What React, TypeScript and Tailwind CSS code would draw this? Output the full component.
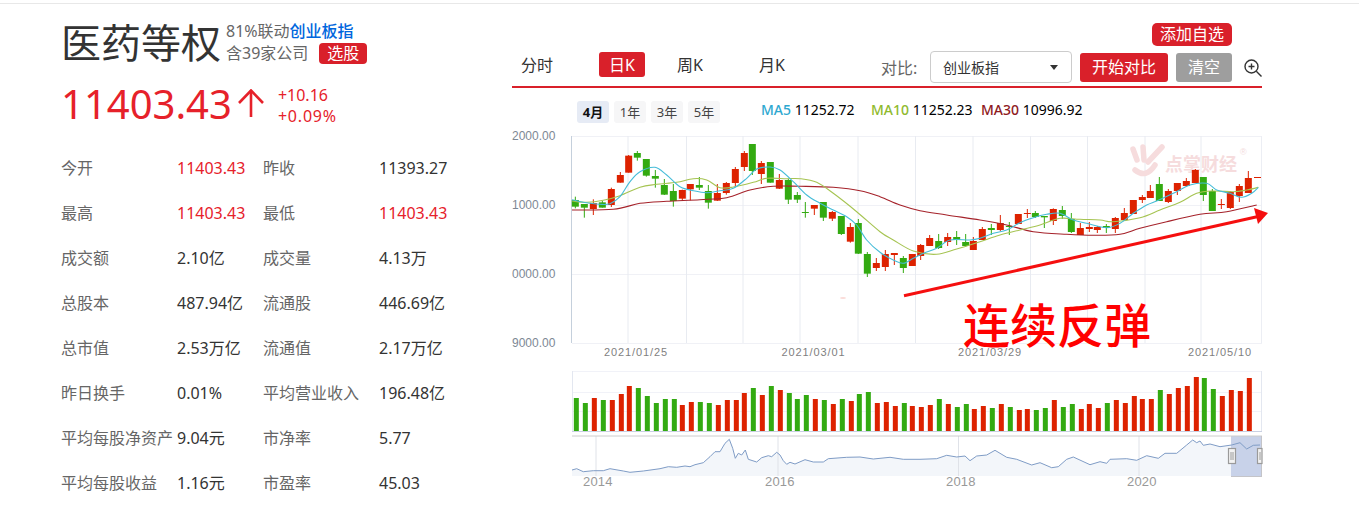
import React from 'react';

type Candle = [number, number, number, number, number, 'r' | 'g'];

const UP = '#dd2200';
const DOWN = '#33aa11';

// x, wick top, wick bottom, body top, body bottom (sampled at 3x, chart origin 500/125)
const candles: Candle[] = [
  [226, 215, 250, 225, 245, 'g'], [253, 237, 278, 237, 248, 'g'], [280, 223, 270, 234, 252, 'r'], [307, 228, 248, 232, 248, 'g'],
  [334, 188, 246, 192, 240, 'r'], [361, 141, 173, 150, 173, 'r'], [386, 90, 143, 92, 143, 'r'], [412, 78, 107, 84, 98, 'g'],
  [439, 102, 155, 102, 152, 'g'], [466, 135, 188, 153, 161, 'g'], [493, 162, 210, 180, 209, 'g'], [520, 177, 245, 198, 228, 'g'],
  [547, 194, 228, 195, 221, 'r'], [571, 177, 226, 177, 193, 'r'], [598, 156, 195, 180, 188, 'g'], [625, 180, 251, 198, 233, 'g'],
  [652, 177, 228, 204, 227, 'r'], [679, 171, 209, 174, 204, 'r'], [706, 126, 185, 132, 174, 'r'], [733, 78, 138, 84, 126, 'r'],
  [757, 57, 150, 57, 138, 'g'], [784, 108, 177, 114, 147, 'r'], [811, 111, 173, 111, 173, 'g'], [838, 147, 192, 165, 191, 'r'],
  [865, 162, 237, 165, 224, 'g'], [892, 201, 234, 210, 224, 'g'], [916, 231, 278, 261, 263, 'g'], [943, 240, 270, 240, 251, 'r'],
  [970, 231, 288, 231, 278, 'g'], [997, 258, 288, 261, 281, 'r'], [1024, 273, 330, 273, 327, 'g'], [1051, 294, 353, 306, 350, 'r'],
  [1075, 282, 387, 294, 386, 'g'], [1102, 381, 456, 387, 446, 'g'], [1129, 399, 438, 414, 429, 'r'], [1156, 375, 438, 387, 426, 'r'],
  [1183, 384, 420, 384, 390, 'r'], [1210, 393, 444, 399, 429, 'g'], [1237, 387, 423, 387, 423, 'r'], [1262, 357, 405, 360, 393, 'r'],
  [1289, 330, 363, 339, 363, 'r'], [1316, 327, 372, 348, 369, 'g'], [1343, 324, 363, 336, 351, 'r'], [1370, 318, 360, 336, 345, 'g'],
  [1397, 327, 366, 351, 363, 'g'], [1420, 336, 375, 348, 375, 'r'], [1447, 306, 345, 312, 345, 'r'], [1474, 297, 330, 309, 315, 'g'],
  [1501, 270, 318, 294, 315, 'r'], [1528, 291, 330, 303, 306, 'g'], [1555, 267, 297, 267, 297, 'r'], [1582, 252, 279, 264, 267, 'r'],
  [1606, 258, 279, 264, 276, 'g'], [1633, 273, 309, 273, 277, 'g'], [1660, 250, 300, 252, 288, 'r'], [1687, 243, 282, 255, 273, 'g'],
  [1714, 264, 324, 282, 321, 'g'], [1741, 294, 330, 309, 330, 'r'], [1768, 291, 321, 306, 312, 'r'], [1792, 303, 324, 306, 315, 'r'],
  [1819, 297, 324, 303, 309, 'g'], [1846, 276, 324, 279, 312, 'r'], [1873, 249, 285, 264, 285, 'r'], [1900, 225, 267, 225, 267, 'r'],
  [1927, 210, 234, 216, 225, 'r'], [1951, 180, 219, 198, 219, 'r'], [1978, 156, 228, 177, 228, 'g'], [2005, 192, 234, 198, 231, 'r'],
  [2032, 174, 210, 174, 198, 'r'], [2059, 159, 186, 168, 183, 'r'], [2086, 132, 174, 135, 174, 'r'], [2110, 156, 228, 156, 210, 'g'],
  [2137, 192, 258, 198, 258, 'g'], [2164, 222, 252, 237, 240, 'r'], [2191, 198, 252, 201, 249, 'r'], [2218, 177, 231, 183, 213, 'r'],
  [2245, 138, 204, 159, 204, 'r'],
];

const ma5: [number, number][] = [
  [216, 224], [250, 232], [300, 238], [330, 236], [360, 215], [390, 170], [420, 140], [465, 127], [500, 150], [540, 185], [580, 197],
  [620, 203], [660, 197], [700, 190], [740, 160], [770, 132], [810, 126], [840, 135], [880, 170], [920, 210], [960, 235], [1000, 255],
  [1040, 275], [1070, 300], [1100, 345], [1140, 382], [1180, 405], [1210, 415], [1240, 400], [1270, 385], [1310, 370], [1350, 345],
  [1410, 345], [1440, 340], [1480, 325], [1520, 315], [1560, 293], [1600, 278], [1640, 268], [1680, 265], [1720, 285], [1760, 295],
  [1820, 308], [1860, 295], [1900, 265], [1940, 240], [1970, 228], [2020, 205], [2070, 180], [2120, 175], [2150, 195], [2190, 205],
  [2225, 217], [2255, 205], [2275, 187],
];

const ma10: [number, number][] = [
  [216, 228], [260, 232], [310, 226], [360, 212], [420, 187], [470, 178], [530, 172], [580, 161], [620, 165], [660, 188], [700, 186],
  [760, 172], [800, 160], [860, 161], [900, 161], [950, 172], [1000, 205], [1070, 260], [1140, 320], [1180, 345], [1240, 378],
  [1310, 388], [1370, 372], [1440, 350], [1500, 330], [1560, 315], [1620, 300], [1680, 280], [1740, 283], [1800, 285], [1840, 290],
  [1920, 278], [1980, 255], [2040, 232], [2090, 205], [2140, 198], [2200, 200], [2240, 195], [2275, 187],
];

const ma30: [number, number][] = [
  [216, 255], [340, 253], [420, 235], [500, 229], [600, 224], [680, 218], [750, 195], [820, 184], [900, 184], [1000, 187], [1080, 197],
  [1140, 215], [1200, 240], [1260, 257], [1340, 270], [1440, 285], [1520, 300], [1600, 320], [1700, 328], [1780, 331], [1860, 328],
  [1920, 310], [2000, 290], [2100, 268], [2180, 260], [2270, 240],
];

// x, top of bar (sampled at 3x from 560/360, second half from 910/360)
const volumeA: [number, number, 'r' | 'g'][] = [
  [49, 114, 'g'], [76, 129, 'g'], [103, 114, 'r'], [130, 120, 'g'], [157, 120, 'r'], [184, 102, 'r'], [208, 78, 'r'], [235, 84, 'g'],
  [262, 108, 'g'], [289, 129, 'g'], [316, 117, 'g'], [343, 117, 'g'], [367, 135, 'r'], [394, 126, 'r'], [421, 126, 'g'], [448, 129, 'g'],
  [475, 135, 'r'], [502, 120, 'r'], [529, 120, 'r'], [553, 99, 'r'], [580, 84, 'g'], [607, 105, 'r'], [634, 78, 'g'], [661, 90, 'r'],
  [688, 99, 'g'], [712, 117, 'g'], [739, 105, 'g'], [766, 117, 'r'], [793, 120, 'g'], [820, 132, 'r'], [847, 117, 'g'], [874, 123, 'r'],
  [898, 102, 'g'], [925, 96, 'g'], [952, 129, 'r'], [979, 126, 'r'], [1006, 138, 'r'], [1033, 129, 'g'],
];

const volumeB: [number, number, 'r' | 'g'][] = [
  [7, 138, 'r'], [34, 141, 'r'], [61, 135, 'r'], [88, 117, 'g'], [115, 132, 'r'], [142, 141, 'g'], [169, 132, 'g'], [193, 147, 'r'],
  [220, 138, 'r'], [247, 144, 'g'], [274, 132, 'r'], [301, 141, 'g'], [328, 150, 'r'], [352, 147, 'r'], [379, 150, 'g'], [406, 144, 'g'],
  [433, 120, 'r'], [460, 141, 'g'], [487, 132, 'g'], [514, 147, 'r'], [538, 132, 'r'], [565, 144, 'r'], [592, 129, 'g'], [619, 120, 'r'],
  [646, 129, 'r'], [673, 108, 'r'], [697, 117, 'r'], [724, 117, 'r'], [751, 90, 'g'], [778, 102, 'r'], [805, 84, 'r'], [832, 78, 'r'],
  [859, 51, 'r'], [883, 54, 'g'], [910, 87, 'g'], [937, 108, 'r'], [964, 90, 'r'], [991, 93, 'r'], [1018, 54, 'r'],
];

const miniA: [number, number][] = [
  [36, 330], [50, 326], [70, 335], [100, 332], [130, 332], [150, 326], [190, 333], [210, 337], [250, 333], [300, 326], [325, 320], [350, 322],
  [375, 318], [390, 320], [405, 314], [430, 308], [450, 290], [465, 275], [480, 275], [495, 250], [508, 238], [518, 265], [526, 295], [535, 280],
  [545, 285], [556, 270], [565, 298], [590, 306], [605, 293], [625, 287], [635, 290], [650, 277], [660, 285], [670, 302], [680, 313], [690, 307],
  [705, 312], [735, 299], [760, 306], [790, 306], [805, 296], [860, 292], [900, 291], [940, 297], [990, 292], [1030, 298],
];

const miniB: [number, number][] = [
  [30, 298], [80, 296], [110, 286], [140, 291], [165, 288], [180, 302], [200, 288], [230, 285], [255, 271], [290, 292], [320, 298], [365, 315],
  [390, 308], [425, 323], [445, 320], [470, 298], [490, 291], [540, 314], [570, 305], [590, 310], [600, 298], [650, 296], [680, 301], [710, 287],
  [745, 295], [765, 280], [800, 280], [830, 255], [848, 240], [860, 248], [870, 243], [880, 256], [900, 252], [930, 260], [965, 255], [990, 248],
  [1010, 267], [1030, 256], [1050, 255],
];

const stats: [string, string, boolean, string, string, boolean][] = [
  ['今开', '11403.43', true, '昨收', '11393.27', false],
  ['最高', '11403.43', true, '最低', '11403.43', true],
  ['成交额', '2.10亿', false, '成交量', '4.13万', false],
  ['总股本', '487.94亿', false, '流通股', '446.69亿', false],
  ['总市值', '2.53万亿', false, '流通值', '2.17万亿', false],
  ['昨日换手', '0.01%', false, '平均营业收入', '196.48亿', false],
  ['平均每股净资产', '9.04元', false, '市净率', '5.77', false],
  ['平均每股收益', '1.16元', false, '市盈率', '45.03', false],
];

const fx = (x: number) => 500 + x / 3 - 512;
const fy = (y: number) => y / 3;

function smooth(points: [number, number][]) {
  let d = `M${points[0][0].toFixed(1)} ${points[0][1].toFixed(1)}`;
  for (let i = 0; i < points.length - 1; i++) {
    const p0 = points[Math.max(0, i - 1)];
    const p1 = points[i];
    const p2 = points[i + 1];
    const p3 = points[Math.min(points.length - 1, i + 2)];
    const c1x = p1[0] + (p2[0] - p0[0]) / 6;
    const c1y = p1[1] + (p2[1] - p0[1]) / 6;
    const c2x = p2[0] - (p3[0] - p1[0]) / 6;
    const c2y = p2[1] - (p3[1] - p1[1]) / 6;
    d += ` C${c1x.toFixed(1)} ${c1y.toFixed(1)} ${c2x.toFixed(1)} ${c2y.toFixed(1)} ${p2[0].toFixed(1)} ${p2[1].toFixed(1)}`;
  }
  return d;
}

const scaled = (pts: [number, number][]) => pts.map(([x, y]) => [fx(x), fy(y)] as [number, number]);

const miniPoints: [number, number][] = [
  ...miniA.map(([x, y]) => [560 + x / 3 - 512, 360 + y / 3 - 125] as [number, number]),
  ...miniB.map(([x, y]) => [910 + x / 3 - 512, 360 + y / 3 - 125] as [number, number]),
];
const miniLine = 'M' + miniPoints.map(([x, y]) => `${x.toFixed(1)} ${y.toFixed(1)}`).join(' L');
const miniArea = `${miniLine} L750 351 L60 351 Z`;

const gridX = [628, 686.5, 743, 800, 858, 915.5, 973, 1030.5, 1087.5, 1145, 1201].map((x) => x - 512);
const priceTicks: [string, number][] = [['2000.00', 136], ['1000.00', 205], ['0000.00', 274], ['9000.00', 343]];
const dateTicks: [string, number][] = [['2021/01/25', 604], ['2021/03/01', 781.5], ['2021/03/29', 958], ['2021/05/10', 1188]];
const yearTicks: [string, number, number][] = [['2014', 583, 596], ['2016', 765, 778], ['2018', 946, 958.5], ['2020', 1127, 1139]];

const KChart = () => (
  <svg width="750" height="365" className="block overflow-visible" fontFamily="'Liberation Sans', sans-serif">
    {/* main grid */}
    {priceTicks.map(([, y]) => (
      <line key={y} x1="60" x2="750" y1={y - 125 + 0.5} y2={y - 125 + 0.5} stroke="#f0f1f6" />
    ))}
    {gridX.map((x) => (
      <line key={x} x1={x} x2={x} y1="11" y2="218" stroke="#e8ebf1" />
    ))}
    <line x1="59.5" x2="59.5" y1="11" y2="218" stroke="#c5d0dc" />
    <line x1="749.5" x2="749.5" y1="11" y2="218" stroke="#eceef4" />
    {priceTicks.map(([label, y]) => (
      <text key={label} x="0" y={y - 125 + 4} fontSize="12" fill="#7d8894">{label}</text>
    ))}
    {dateTicks.map(([label, x]) => (
      <text key={label} x={x - 512} y="231" fontSize="11" letterSpacing="0.9" fill="#7f7f7f">{label}</text>
    ))}

    {/* watermark */}
    <g stroke="#f6dcdd" strokeWidth="5.5" strokeLinecap="round" fill="none">
      <path d="M621 24 L625 35" />
      <path d="M631 22 L632 35" />
      <path d="M650 22 L636 37" />
      <path d="M623 45 Q634 54 643 40" />
    </g>
    <text x="653" y="46" fontSize="18" fontWeight="700" fontFamily="'Noto Sans CJK SC', sans-serif" fill="#f6dcdd">点掌财经</text>
    <text x="728" y="30" fontSize="9" fill="#f3dcdc">®</text>
    <ellipse cx="331" cy="173" rx="3" ry="1" fill="#fbdcd8" />

    {/* candles */}
    {candles.map(([x, wt, wb, bt, bb, c]) => {
      const color = c === 'r' ? UP : DOWN;
      return (
        <g key={x}>
          <line x1={fx(x)} x2={fx(x)} y1={fy(wt)} y2={fy(wb)} stroke={color} />
          <rect x={fx(x) - 3.5} y={fy(bt)} width="7" height={Math.max(1, fy(bb) - fy(bt))} fill={color} />
        </g>
      );
    })}
    <line x1="742" x2="749" y1="52.5" y2="52.5" stroke={UP} />

    <path d={smooth(scaled(ma30))} fill="none" stroke="#a5222a" strokeWidth="1.1" />
    <path d={smooth(scaled(ma10))} fill="none" stroke="#a6c452" strokeWidth="1.1" />
    <path d={smooth(scaled(ma5))} fill="none" stroke="#45bcd8" strokeWidth="1.1" />

    {/* trend arrow */}
    <line x1="392" y1="170.7" x2="745" y2="91.7" stroke="#f50f0f" strokeWidth="3" />
    <polygon points="742,83 756,88 746,99" fill="#f50f0f" />

    {/* volume */}
    {[246, 267, 286].map((y) => (
      <line key={y} x1="60" x2="750" y1={y + 0.5} y2={y + 0.5} stroke="#f1f2f8" />
    ))}
    <line x1="60.5" x2="60.5" y1="246" y2="307" stroke="#e3e7f0" />
    <line x1="749.5" x2="749.5" y1="246" y2="307" stroke="#e3e7f0" />
    {volumeA.map(([x, top, c]) => (
      <rect key={x} x={560 + x / 3 - 512 - 2.5} y={360 + top / 3 - 125} width="5" height={431 - (360 + top / 3)} fill={c === 'r' ? UP : DOWN} />
    ))}
    {volumeB.map(([x, top, c]) => (
      <rect key={x} x={910 + x / 3 - 512 - 2.5} y={360 + top / 3 - 125} width="5" height={431 - (360 + top / 3)} fill={c === 'r' ? UP : DOWN} />
    ))}
    <line x1="60" x2="750" y1="306.5" y2="306.5" stroke="#c9d0e2" />

    {/* overview */}
    <path d={miniArea} fill="#f3f6fa" />
    {yearTicks.map(([, , x]) => (
      <line key={x} x1={x - 512} x2={x - 512} y1="311" y2="351" stroke="#dfe2e8" />
    ))}
    <rect x="719" y="311" width="31" height="40" fill="#c8d2e9" />
    <path d={miniLine} fill="none" stroke="#7f9cc6" strokeWidth="1" />
    <line x1="60" x2="750" y1="311" y2="311" stroke="#cccccc" />
    <line x1="719" x2="750" y1="351.5" y2="351.5" stroke="#c4c4c8" />
    <line x1="749.5" x2="749.5" y1="311" y2="351" stroke="#c4c4c8" />
    <g>
      <rect x="716.5" y="323.5" width="7" height="15" fill="#f3f3f3" stroke="#9a9a9a" strokeWidth="1.2" />
      <line x1="719" x2="719" y1="327" y2="335" stroke="#9a9a9a" />
      <line x1="721" x2="721" y1="327" y2="335" stroke="#9a9a9a" />
      <rect x="745.5" y="323.5" width="4.5" height="15" fill="#f3f3f3" stroke="#9a9a9a" strokeWidth="1.2" />
      <line x1="748" x2="748" y1="327" y2="335" stroke="#9a9a9a" />
    </g>
    {yearTicks.map(([label, x]) => (
      <text key={label} x={x - 512} y="361" fontSize="13" letterSpacing="0.2" fill="#999999">{label}</text>
    ))}
  </svg>
);

const App = () => {
  return (
    <div className="h-[517px] w-[1359px] overflow-hidden bg-white font-['Noto_Sans','Noto_Sans_CJK_SC',sans-serif] text-[16px] text-[#333]">
      <div className="mt-[3px] h-px bg-[#e8e8e8]" />
      <div className="flex">
        {/* left column */}
        <div className="w-[512px] pl-[61px]">
          <div className="flex h-[62px] items-start pt-[16px]">
            <h1 className="w-[165px] text-[40px] leading-[46px] font-normal text-[#333]">医药等权</h1>
            <div className="text-[16px] text-[#666]">
              <div className="flex h-[22px] items-center leading-[22px]">
                81%联动<span className="font-medium text-[#0066dd]">创业板指</span>
              </div>
              <div className="flex h-[22px] items-center leading-[22px]">
                含39家公司
                <span className="ml-[11px] rounded-[4px] bg-[#d9202a] px-[8px] text-[16px] leading-[21px] text-white">选股</span>
              </div>
            </div>
          </div>
          <div className="mt-[12px] flex h-[52px] items-center">
            <span className="text-[40px] leading-[52px] text-[#e6212a]">11403.43</span>
            <svg width="32" height="30" viewBox="0 0 32 30" className="ml-[3px]" fill="none" stroke="#e6212a" strokeWidth="2.6">
              <path d="M16 1.5V28" />
              <path d="M4 14L16 1.5L28 14" />
            </svg>
            <div className="ml-[11px] pt-[4px] text-[#e6212a]">
              <div className="leading-[21px]">+10.16</div>
              <div className="leading-[21px] tracking-[0.8px]">+0.09%</div>
            </div>
          </div>
          <div className="mt-[15px] grid grid-cols-[116px_86px_116px_auto]">
            {stats.map(([l1, v1, red1, l2, v2, red2]) => (
              <React.Fragment key={l1}>
                <div className="flex h-[45px] items-center whitespace-nowrap text-[#666]">{l1}</div>
                <div className={`flex h-[45px] items-center whitespace-nowrap ${red1 ? 'text-[#e6212a]' : 'text-[#333]'}`}>{v1}</div>
                <div className="flex h-[45px] items-center whitespace-nowrap text-[#666]">{l2}</div>
                <div className={`flex h-[45px] items-center whitespace-nowrap ${red2 ? 'text-[#e6212a]' : 'text-[#333]'}`}>{v2}</div>
              </React.Fragment>
            ))}
          </div>
        </div>

        {/* right column */}
        <div className="relative w-[750px]">
          <div className="flex h-[19px] items-start justify-end pr-[30px] pt-[19px]">
            <button className="h-[23px] w-[80px] rounded-[5px] bg-[#d9202a] text-[16px] leading-[23px] text-white">添加自选</button>
          </div>
          <div className="flex h-[65px] items-start border-b-2 border-[#d9202a] pt-[29px]">
            <span className="ml-[9px] mt-px w-[78px] leading-[25px]">分时</span>
            <span className="h-[25px] w-[46px] rounded-[3px] bg-[#d9202a] text-center leading-[26px] text-white">日K</span>
            <span className="ml-[32px] mt-px w-[82px] leading-[25px]">周K</span>
            <span className="mt-px w-[122px] leading-[25px]">月K</span>
            <span className="mt-[2px] w-[49px] leading-[28px] text-[#666]">对比:</span>
            <div className="-mt-[1px] flex h-[32px] w-[142px] items-center justify-between rounded-[4px] border border-[#ccc] pl-[12px] pr-[13px] text-[14px]">
              创业板指
              <span className="h-0 w-0 border-x-[4px] border-t-[5px] border-x-transparent border-t-[#333]" />
            </div>
            <button className="ml-[8px] mt-[1px] h-[29px] w-[88px] rounded-[3px] bg-[#d9202a] leading-[29px] text-white">开始对比</button>
            <button className="ml-[8px] mt-[1px] h-[29px] w-[56px] rounded-[3px] bg-[#9e9e9e] leading-[29px] text-white">清空</button>
            <svg width="18" height="18" viewBox="0 0 18 18" className="ml-[12px] mt-[7px]" fill="none" stroke="#333" strokeWidth="1.4">
              <circle cx="7.5" cy="7.5" r="6.5" />
              <path d="M12.3 12.3L17.5 17.5" />
              <path d="M7.5 4.5V10.5M4.5 7.5H10.5" />
            </svg>
          </div>
          <div className="flex h-[37px] items-start pt-[13px] text-[14px]">
            <span className="ml-[65px] h-[22px] w-[32px] rounded-[3px] bg-[#e6ebf5] text-center text-[13px] leading-[22px] font-bold text-[#111]">4月</span>
            <span className="ml-[5px] h-[22px] w-[32px] rounded-[3px] bg-[#f6f6f7] text-center text-[13px] leading-[22px] text-[#444]">1年</span>
            <span className="ml-[5px] h-[22px] w-[32px] rounded-[3px] bg-[#f6f6f7] text-center text-[13px] leading-[22px] text-[#444]">3年</span>
            <span className="ml-[5px] h-[22px] w-[32px] rounded-[3px] bg-[#f6f6f7] text-center text-[13px] leading-[22px] text-[#444]">5年</span>
            <span className="ml-[41px] -mt-px w-[110px] whitespace-nowrap leading-[20px] text-black"><span className="font-medium text-[#2ea8d0]">MA5</span> 11252.72</span>
            <span className="-mt-px w-[110px] whitespace-nowrap leading-[20px] text-black"><span className="font-medium text-[#8fba2e]">MA10</span> 11252.23</span>
            <span className="-mt-px whitespace-nowrap leading-[20px] text-black"><span className="font-medium text-[#8e1a22]">MA30</span> 10996.92</span>
          </div>
          <KChart />
          <div className="absolute left-[451px] top-[301px] text-[47px] leading-[40px] font-medium whitespace-nowrap text-[#ff0000]">连续反弹</div>
        </div>
      </div>
    </div>
  );
};

export default App;
